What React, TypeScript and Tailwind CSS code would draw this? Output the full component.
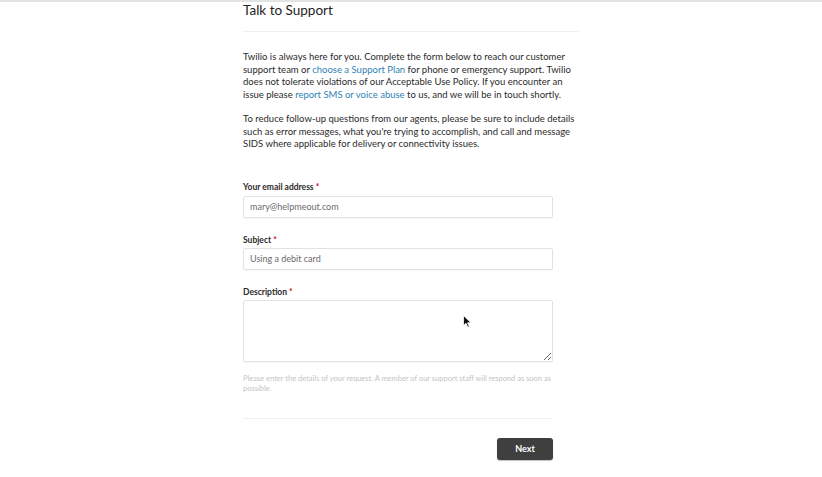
import React from "react";

const font = { fontFamily: "Lato, 'Open Sans', sans-serif" };

const Label = ({ children }: { children: React.ReactNode }) => (
  <label className="block text-[8.5px] leading-[12px] font-bold text-[#2b2b2b]">
    {children}
    <span className="ml-[2px] text-[#d6001c]">*</span>
  </label>
);

const Cursor = () => (
  <svg
    className="absolute left-[463px] top-[315px]"
    width="9"
    height="13"
    viewBox="0 0 9 13"
  >
    <path
      d="M0.5 0.5 L0.5 10.5 L3 8.3 L4.8 12.3 L6.3 11.6 L4.6 7.8 L8 7.8 Z"
      fill="#111"
      stroke="#fff"
      strokeWidth="0.8"
    />
  </svg>
);

export default function App() {
  return (
    <div className="relative min-h-[477px] bg-white text-[#333]" style={font}>
      <div className="h-[2px] bg-[#e3e3e3]" />
      <div className="mx-auto w-[336px]">
        <h1 className="text-[13.5px] leading-[17px] text-[#222]">Talk to Support</h1>
        <div className="mt-[12px] h-px bg-[#efefef]" />

        <div className="mt-[19px] text-[9.5px] leading-[12.5px] text-[#2a2a2a]">
          <p>
            Twilio is always here for you. Complete the form below to reach our customer
            support team or{" "}
            <a className="text-[#2f7fb5]">choose a Support Plan</a> for phone or emergency
            support. Twilio does not tolerate violations of our Acceptable Use Policy. If you
            encounter an issue please{" "}
            <a className="text-[#2f7fb5]">report SMS or voice abuse</a> to us, and we will
            be in touch shortly.
          </p>
          <p className="mt-[12px]">
            To reduce follow-up questions from our agents, please be sure to include details
            such as error messages, what you're trying to accomplish, and call and message
            SIDS where applicable for delivery or connectivity issues.
          </p>
        </div>

        <form className="mt-[30px] w-[310px]">
          <Label>Your email address</Label>
          <input
            readOnly
            defaultValue="mary@helpmeout.com"
            className="mt-[3px] block h-[22px] w-full rounded-[2px] border border-[#e2e2e2] px-[6px] text-[9px] text-[#6b6b6b] shadow-[0_1px_1px_rgba(0,0,0,0.04)] outline-none"
          />

          <div className="mt-[16px]">
            <Label>Subject</Label>
          </div>
          <input
            readOnly
            defaultValue="Using a debit card"
            className="mt-[2px] block h-[22px] w-full rounded-[2px] border border-[#e2e2e2] px-[6px] text-[9px] text-[#6b6b6b] shadow-[0_1px_1px_rgba(0,0,0,0.04)] outline-none"
          />

          <div className="mt-[16px]">
            <Label>Description</Label>
          </div>
          <textarea
            readOnly
            className="mt-[2px] block h-[62px] w-full rounded-[2px] border border-[#e2e2e2] px-[6px] text-[9px] shadow-[0_1px_1px_rgba(0,0,0,0.04)] outline-none"
          />

          <p className="mt-[12px] text-[7.5px] leading-[10px] text-[#c4c4c4]">
            Please enter the details of your request. A member of our support staff will
            respond as soon as possible.
          </p>

          <div className="mt-[24px] h-px bg-[#f0f0f0]" />

          <div className="mt-[19px] flex justify-end">
            <button
              type="button"
              className="h-[22px] w-[56px] rounded-[3px] bg-[#3f3f3f] text-[9px] font-bold text-white shadow-[0_1px_1px_rgba(0,0,0,0.25)]"
            >
              Next
            </button>
          </div>
        </form>
      </div>
      <Cursor />
    </div>
  );
}
